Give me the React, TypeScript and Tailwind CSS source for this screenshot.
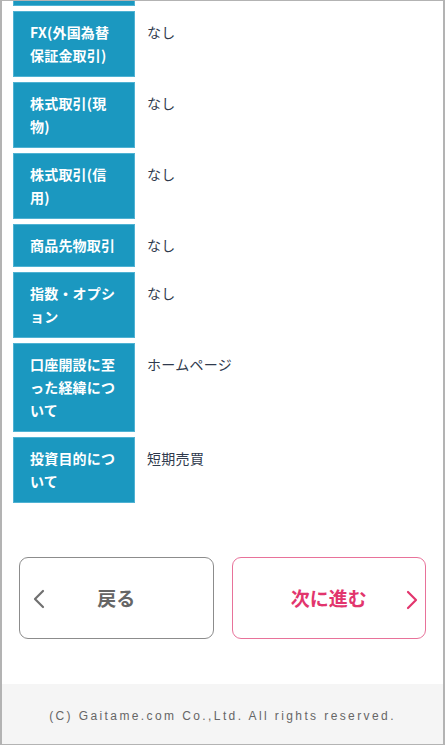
import type { ReactNode } from "react";

interface Row {
  label: ReactNode;
  value: string;
}

const rows: Row[] = [
  { label: "FX(外国為替保証金取引)", value: "なし" },
  { label: "株式取引(現物)", value: "なし" },
  { label: "株式取引(信用)", value: "なし" },
  { label: "商品先物取引", value: "なし" },
  { label: "指数・オプション", value: "なし" },
  { label: "口座開設に至った経緯について", value: "ホームページ" },
  { label: "投資目的について", value: "短期売買" },
];

const jp = "font-['Noto_Sans_CJK_JP','Noto_Sans',sans-serif]";

function Chevron({ dir, className }: { dir: "left" | "right"; className: string }) {
  return (
    <svg width="12" height="20" viewBox="0 0 12 20" fill="none" className={className}>
      <path
        d={dir === "left" ? "M10 2 L2 10 L10 18" : "M2 2 L10 10 L2 18"}
        stroke="currentColor"
        strokeWidth="2.2"
        strokeLinecap="round"
        strokeLinejoin="round"
      />
    </svg>
  );
}

export default function App() {
  return (
    <div
      className={`w-[445px] h-[745px] bg-white border-y border-x-2 border-[#b3b3b3] flex flex-col overflow-hidden ${jp}`}
    >
      {/* 確認テーブル */}
      <div className="flex flex-col gap-[5px] pl-[11px]">
        <div className="w-[122px] h-[5px] bg-[#1b98c0] border-x border-b border-[#4fb2d3]" />
        {rows.map((row, i) => (
          <div key={i} className="flex items-start gap-[12px]">
            <div className="w-[122px] shrink-0 bg-[#1b98c0] border border-[#4fb2d3] pl-[16px] pr-[16px] py-[9px] text-white text-[14px] font-bold leading-[23px] tracking-[0.2px]">
              {row.label}
            </div>
            <div className="pt-[10px] text-[14px] leading-[23px] tracking-[0.3px] text-[#2f3a4d]">{row.value}</div>
          </div>
        ))}
      </div>

      {/* ボタン */}
      <div className="grid grid-cols-2 gap-[18px] px-[17px] mt-[54px]">
        <button className="relative h-[82px] rounded-[9px] border border-[#8c8c8c] bg-white flex items-center justify-center text-[19px] font-bold text-[#666666]">
          <Chevron dir="left" className="absolute left-[13px] top-[31px] text-[#707070]" />
          戻る
        </button>
        <button className="relative h-[82px] rounded-[9px] border border-[#e8729a] bg-white flex items-center justify-center text-[19px] font-bold text-[#e2356d]">
          次に進む
          <Chevron dir="right" className="absolute right-[7px] top-[32px] text-[#e2356d]" />
        </button>
      </div>

      <div className="flex-1" />

      {/* フッター */}
      <div className="h-[60px] bg-[#f5f5f5] flex items-center justify-center pt-[3px]">
        <p className="text-[12px] tracking-[2.4px] text-[#666666] font-['Liberation_Sans',sans-serif]">
          (C) Gaitame.com Co.,Ltd. All rights reserved.
        </p>
      </div>
    </div>
  );
}
